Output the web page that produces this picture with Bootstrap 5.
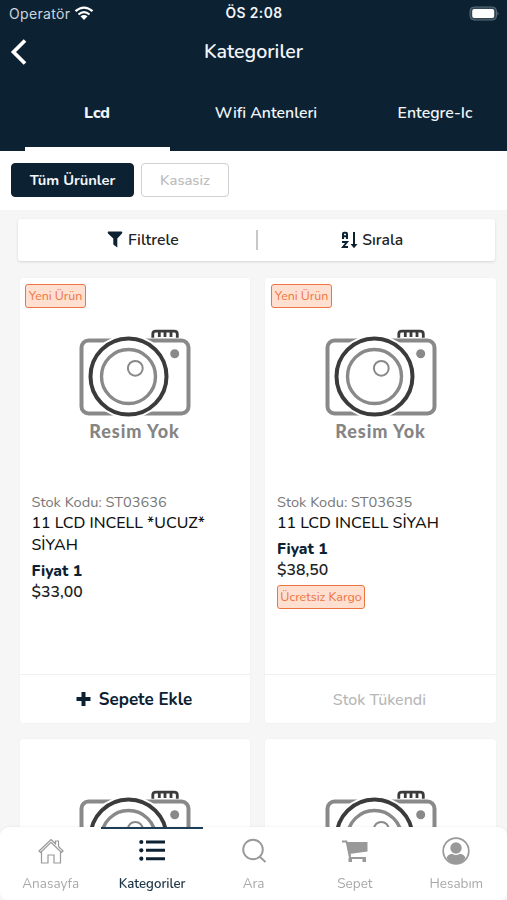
<!DOCTYPE html>
<html lang="tr">
<head>
<meta charset="utf-8">
<meta name="viewport" content="width=device-width, initial-scale=1">
<title>Kategoriler</title>
<link href="https://cdn.jsdelivr.net/npm/bootstrap@5.3.0/dist/css/bootstrap.min.css" rel="stylesheet">
<style>
:root{--navy:#0c2233;--orange:#ed7440}
body{font-family:Nunito,Lato,"Open Sans",sans-serif;background:#f6f6f6;color:#222;height:900px;overflow:hidden;line-height:1}
svg{display:block;flex:none}
.app-head{background:var(--navy);height:151px;color:#f2f6fa}
.status{height:27px;padding:0 8px 0 9px;font-family:"Inter",sans-serif;font-size:13.8px}
.status-side{flex:1 1 0}
.carrier{color:#ccd5dc;font-size:14px;letter-spacing:.35px}
.clock{font-weight:600;letter-spacing:.4px}
.title-row{height:50px;padding:0 10px}
.title-row h1{font-size:19.6px;font-weight:600}
.tab-row{height:74px;display:grid;grid-template-columns:145px 193px 145px;padding-left:25px}
.tab-item{font-size:15.8px;font-weight:600;border-bottom:4px solid transparent;padding:4px 1px 0 0}
.tab-item.current{border-color:#fff;font-weight:800}
.chips{height:59px;padding:12px 11px;gap:7px}
.chip{height:34px;border-radius:4px;font-size:14.7px;border:1.5px solid #d0d0d0;color:#bdbdbd;font-weight:600}
.chip.on{background:var(--navy);border-color:var(--navy);color:#f4f7fa;font-weight:700}
.chip.on{width:123px}.chip.off{width:88px}
.tools{margin:9px 12px 0 18px;height:42px;border-radius:3px;box-shadow:0 1px 3px #0002;font-size:15.7px;font-weight:600}
.tools span{padding-top:2px}
.tools .divider{width:2px;height:20px;background:#c7c7c7}
.tool-l{padding-left:12px}
.tool-r{padding-right:8px}
.grid{display:grid;grid-template-columns:230px 231px;gap:16px 15px;padding:17px 0 0 20px}
.product{height:445px;border-radius:3px;box-shadow:0 0 2px #0000000c}
.tag-row{padding:6px 0 0 5px}
.product:nth-child(2n) .tag-row{padding-left:6px}
.tag{border:1.5px solid var(--orange);background:#ffdfd0;color:var(--orange);border-radius:3px;height:24px;font-size:12.4px;width:61px}
.tag.free{width:88px;margin-top:4px;font-size:12.5px}
.pic{padding:20px 0 0 58.5px;height:184px}
.product:nth-child(2n) .pic{padding-left:59.5px}
.pic figcaption{width:112px;font-family:Lato,sans-serif;font-weight:900;font-size:18px;letter-spacing:.95px;color:#858585;margin-top:3px;text-align:center;line-height:20px}
.info{padding:0 12px 0 11.5px;height:180px;font-size:16px;line-height:22px}
.product:nth-child(2n) .info{padding-left:12px}
.code{font-size:14.6px;color:#777;line-height:20px}
.name{color:#111;font-weight:500;font-size:15.9px}
.plabel{font-weight:800;color:var(--navy);margin-top:4px;font-size:15.6px}
.price{font-weight:600;font-size:15.8px;line-height:21px}
.buy{height:49px;border-top:1px solid #f0f0f0;font-size:17px;font-weight:700;color:var(--navy);padding-right:2px}
.buy span{padding-top:1px}
.buy.out{font-weight:500;color:#b7b7b7;font-size:16px;padding-top:1px}
.dock{height:73px;border-radius:9px 9px 8px 8px;color:#a8a8a8;font-size:13.5px;box-shadow:0 -1px 2px #0000000a}
.dock-item{padding-top:8px;border-top:2px solid transparent;gap:11px}
.dock-item.current{border-color:#1d3c56;color:#1d3445}
.dock-item.current span{font-weight:600;font-size:13.2px;padding-top:1px}
</style>
<script src="https://cdn.jsdelivr.net/npm/bootstrap@5.3.0/dist/js/bootstrap.bundle.min.js"></script>
</head>
<body>
<svg width="0" height="0" class="position-absolute"><defs>
<g id="camera" fill="none">
<rect x="2.5" y="12.5" width="107" height="73" rx="7" stroke="#898989" stroke-width="4"/>
<circle cx="49.5" cy="48.5" r="42" fill="#fff"/>
<circle cx="49.5" cy="48.5" r="38" stroke="#3b3b3b" stroke-width="4"/>
<circle cx="49.5" cy="48.5" r="27" stroke="#898989" stroke-width="3.4"/>
<circle cx="56.3" cy="40.3" r="7.4" stroke="#898989" stroke-width="2"/>
<circle cx="95.7" cy="25.7" r="4.5" fill="#898989"/>
<path d="M73.8 9.7V6Q73.8 3.2 77 3.2H95Q98.3 3.2 98.3 6V9.7M80.3 4V9M86 4V9M92 4V9" stroke="#3b3b3b" stroke-width="2.8"/>
</g></defs></svg>
<div class="d-flex flex-column vh-100">
<header class="app-head flex-shrink-0">
<div class="status d-flex align-items-center">
<div class="status-side d-flex align-items-center gap-1"><span class="carrier">Operatör</span>
<svg width="20" height="15" viewBox="0 0 20 15"><g fill="none" stroke="#fff" stroke-width="2.2"><path d="M1.5 5.2Q10-2.1 18.5 5.2M4.5 8.5Q10 3.7 15.5 8.5"/></g><path d="M6.5 10.3Q10 7.5 13.5 10.3L10 14Z" fill="#fff"/></svg></div>
<span class="clock">ÖS 2:08</span>
<div class="status-side d-flex justify-content-end"><svg width="30" height="15" viewBox="0 0 30 15"><rect x="1" y="1" width="26.5" height="13" rx="4" fill="#314553" stroke="#586a76"/><rect x="3.2" y="3" width="22" height="9" rx="2" fill="#fff"/><path d="M28.5 5.5Q30.5 7.5 28.5 9.5Z" fill="#60717c"/></svg></div>
</div>
<div class="title-row d-flex align-items-center">
<div class="status-side"><svg width="18" height="26" viewBox="0 0 18 26"><path d="M15 1.5 3.5 13 15 24.5" fill="none" stroke="#fff" stroke-width="3.7"/></svg></div><h1 class="m-0">Kategoriler</h1><div class="status-side"></div>
</div>
<nav class="tab-row">
<div class="tab-item current d-flex align-items-center justify-content-center">Lcd</div><div class="tab-item d-flex align-items-center justify-content-center">Wifi Antenleri</div><div class="tab-item d-flex align-items-center justify-content-center">Entegre-Ic</div>
</nav>
</header>
<div class="chips d-flex bg-white flex-shrink-0"><div class="chip on d-flex align-items-center justify-content-center">Tüm Ürünler</div><div class="chip off d-flex align-items-center justify-content-center">Kasasiz</div></div>
<main class="flex-grow-1 overflow-hidden">
<div class="tools bg-white d-flex align-items-center">
<div class="flex-fill d-flex justify-content-center align-items-center gap-1 w-50 tool-l"><svg width="17" height="17" viewBox="0 0 17 17"><path d="M1.3 .5H14.7Q15.8 1.2 15 2.4L10.3 7.5V16.5L6.3 13.5V7.5L1 2.4Q.2 1.2 1.3 .5Z" fill="#0c2233"/></svg><span>Filtrele</span></div>
<div class="divider"></div>
<div class="flex-fill d-flex justify-content-center align-items-center gap-1 w-50 tool-r"><svg width="17" height="18" viewBox="0 0 17 18"><g fill="none" stroke="#0c2233" stroke-width="2"><path d="M2 8V3Q2 1.8 3.2 1.8H4.8Q6 1.8 6 3V8M2 5.3H6M1 11H6L2 16H7M13 1V15"/></g><path d="M9.5 13H16.5L13 17.3Z" fill="#0c2233"/></svg><span>Sırala</span></div>
</div>
<section class="grid">
<article class="product bg-white d-flex flex-column">
<div class="tag-row"><div class="tag d-flex align-items-center justify-content-center">Yeni Ürün</div></div>
<figure class="pic m-0"><svg width="113" height="90" viewBox="0 0 113 90"><use href="#camera"/></svg><figcaption>Resim Yok</figcaption></figure>
<div class="info"><div class="code">Stok Kodu: ST03636</div><div class="name">11 LCD INCELL *UCUZ* SİYAH</div><div class="plabel">Fiyat 1</div><div class="price">$33,00</div></div>
<div class="buy mt-auto d-flex align-items-center justify-content-center gap-2"><svg width="15" height="14" viewBox="0 0 15 14"><path d="M7.5 0V14M.5 7H14.5" stroke="#0c2233" stroke-width="4"/></svg><span>Sepete Ekle</span></div>
</article>
<article class="product bg-white d-flex flex-column">
<div class="tag-row"><div class="tag d-flex align-items-center justify-content-center">Yeni Ürün</div></div>
<figure class="pic m-0"><svg width="113" height="90" viewBox="0 0 113 90"><use href="#camera"/></svg><figcaption>Resim Yok</figcaption></figure>
<div class="info"><div class="code">Stok Kodu: ST03635</div><div class="name">11 LCD INCELL SİYAH</div><div class="plabel">Fiyat 1</div><div class="price">$38,50</div><div class="tag free d-flex align-items-center justify-content-center">Ücretsiz Kargo</div></div>
<div class="buy out mt-auto d-flex align-items-center justify-content-center">Stok Tükendi</div>
</article>
<article class="product bg-white"><div class="tag-row"><div class="tag invisible"></div></div><figure class="pic m-0"><svg width="113" height="90" viewBox="0 0 113 90"><use href="#camera"/></svg></figure></article>
<article class="product bg-white"><div class="tag-row"><div class="tag invisible"></div></div><figure class="pic m-0"><svg width="113" height="90" viewBox="0 0 113 90"><use href="#camera"/></svg></figure></article>
</section>
</main>
<nav class="dock bg-white d-flex flex-shrink-0 fixed-bottom">
<div class="dock-item flex-fill w-25 d-flex flex-column align-items-center"><svg width="28" height="29" viewBox="0 0 28 29"><path d="M2 14 14 2.5 18.5 6.8V4H21.5V9.5L26 14 24.5 15.5 23.5 14.5V26H17V18H11V26H4.5V14.5L3.5 15.5ZM4.5 14.5 14 5.3 23.5 14.5" fill="none" stroke="#999" stroke-width="1.2"/></svg><span>Anasayfa</span></div>
<div class="dock-item current flex-fill w-25 d-flex flex-column align-items-center"><svg width="28" height="29" viewBox="0 0 28 29"><path d="M8 5H27M8 13.3H27M8 21.7H27" stroke="#0c2233" stroke-width="3"/><g fill="#0c2233"><circle cx="3.3" cy="5" r="2.1"/><circle cx="3.3" cy="13.3" r="2.1"/><circle cx="3.3" cy="21.7" r="2.1"/></g></svg><span>Kategoriler</span></div>
<div class="dock-item flex-fill w-25 d-flex flex-column align-items-center"><svg width="28" height="29" viewBox="0 0 28 29"><g fill="none" stroke="#999" stroke-width="1.9"><circle cx="13" cy="12.5" r="9.8"/><path d="M19.5 19.5 25.5 25"/></g></svg><span>Ara</span></div>
<div class="dock-item flex-fill w-25 d-flex flex-column align-items-center"><svg width="28" height="29" viewBox="0 0 28 29"><path d="M6 5H26.5V14.5L8 17Z" fill="#999"/><path d="M1 4.5H5.5L9 21H25M9 17V21" fill="none" stroke="#999" stroke-width="1.8"/><path d="M7.5 21H11V25H7.5ZM21.5 21H25V25H21.5Z" fill="#999"/></svg><span>Sepet</span></div>
<div class="dock-item flex-fill w-25 d-flex flex-column align-items-center"><svg width="28" height="29" viewBox="0 0 28 29"><circle cx="14" cy="14" r="12.8" fill="none" stroke="#999" stroke-width="1.7"/><circle cx="14" cy="11" r="5.7" fill="#999"/><path d="M4.5 21Q6 17 10 16.7Q14 19.5 18 16.7Q22 17 23.5 21Q20 26.5 14 26.5T4.5 21Z" fill="#999"/></svg><span>Hesabım</span></div>
</nav>
</div>
</body>
</html>
